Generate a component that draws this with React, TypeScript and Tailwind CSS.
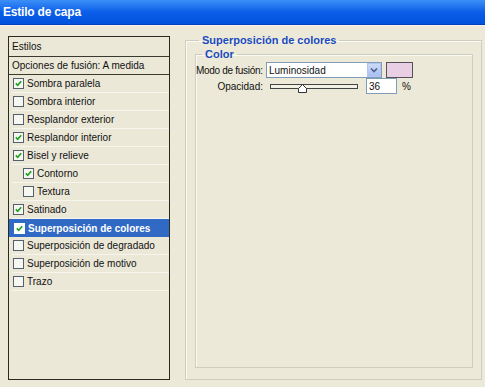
import React from 'react'

const font = "font-['Liberation_Sans',Arial,sans-serif]"

const CheckBox = ({ checked, light }: { checked: boolean; light?: boolean }) => (
  <span
    className={`w-[11px] h-[11px] shrink-0 border ${light ? 'border-white bg-white' : 'border-[#55606e] bg-[#f7f7f2]'} flex items-center justify-center`}
  >
    {checked && (
      <svg width="7" height="7" viewBox="0 0 7 7">
        <path d="M0.8 3.4 L2.7 5.3 L6.2 1.2" fill="none" stroke="#21a121" strokeWidth="1.7" />
      </svg>
    )}
  </span>
)

interface RowProps {
  label: string
  checked: boolean
  indent?: boolean
  selected?: boolean
}

const StyleRow = ({ label, checked, indent, selected }: RowProps) => (
  <div
    className={`h-[18px] flex items-center gap-[3px] ${indent ? 'pl-[11px]' : 'pl-[1px]'} ${
      selected ? 'bg-[#316ac5] text-white font-bold' : 'border-b border-[#f7f6ee] ml-[3px] text-[#111]'
    }`}
  >
    <span className={selected ? 'ml-[4px] flex' : 'flex'}>
      <CheckBox checked={checked} light={selected} />
    </span>
    <span>{label}</span>
  </div>
)

const rows: RowProps[] = [
  { label: 'Sombra paralela', checked: true },
  { label: 'Sombra interior', checked: false },
  { label: 'Resplandor exterior', checked: false },
  { label: 'Resplandor interior', checked: true },
  { label: 'Bisel y relieve', checked: true },
  { label: 'Contorno', checked: true, indent: true },
  { label: 'Textura', checked: false, indent: true },
  { label: 'Satinado', checked: true },
  { label: 'Superposición de colores', checked: true, selected: true },
  { label: 'Superposición de degradado', checked: false },
  { label: 'Superposición de motivo', checked: false },
  { label: 'Trazo', checked: false },
]

export default function App() {
  return (
    <div className={`w-[485px] h-[387px] bg-[#ece9d8] flex flex-col overflow-hidden text-[10px] ${font}`}>
      <div className="h-[25px] shrink-0 bg-gradient-to-b from-[#3d8ff7] via-[#0a5ee8] to-[#0052dc] border-b border-[#003fb5] flex items-center pl-[3px]">
        <span className="text-white font-bold text-[12px] tracking-[-0.2px]">Estilo de capa</span>
      </div>
      <div className="h-[1px] bg-[#f5f4ee]" />
      <div className="flex pl-[8px] pt-[10px]">
        <div className="w-[162px] h-[344px] border border-[#2a2a22] bg-[#ebe8d8] flex flex-col">
          <div className="h-[20px] border-b border-[#3a3a30] flex items-center pl-[3px] text-[#111]">Estilos</div>
          <div className="h-[18px] border-b border-[#3a3a30] flex items-center pl-[3px] text-[#111]">
            Opciones de fusión: A medida
          </div>
          {rows.map((r) => (
            <StyleRow key={r.label} {...r} />
          ))}
        </div>

        <fieldset className="ml-[15px] mt-[-2px] w-[297px] h-[346px] border border-[#cfcdbd] shadow-[inset_1px_1px_0_#fbfaf4] pl-[9px] pr-[8px] pb-[10px]">
          <legend className="ml-[4px] px-[3px] text-[#1a4bbf] font-bold text-[11px] leading-[12px]">
            Superposición de colores
          </legend>
          <fieldset className="h-[320px] mt-[2px] border border-[#cfcdbd] shadow-[inset_1px_1px_0_#fbfaf4] pt-[2px]">
            <legend className="ml-[6px] px-[3px] text-[#1a4bbf] font-bold text-[11px] leading-[12px]">Color</legend>
            <div className="flex items-center h-[16px]">
              <span className="w-[70px] shrink-0 whitespace-nowrap text-right pr-[5px] tracking-[-0.3px] text-[#111]">Modo de fusión:</span>
              <div className="w-[116px] h-[16px] border border-[#7f9db9] bg-white flex items-center justify-between">
                <span className="pl-[2px] text-[#111]">Luminosidad</span>
                <span className="w-[14px] h-[14px] bg-gradient-to-b from-[#cdd9f8] to-[#a9bff3] border border-[#b4c6f0] flex items-center justify-center">
                  <svg width="8" height="6" viewBox="0 0 8 6">
                    <path d="M1 1.5 L4 4.5 L7 1.5" fill="none" stroke="#4d6185" strokeWidth="1.6" />
                  </svg>
                </span>
              </div>
              <div className="ml-[4px] w-[27px] h-[16px] border border-[#55505a] bg-[#e8cfe3]" />
            </div>
            <div className="flex items-center h-[16px]">
              <span className="w-[70px] shrink-0 whitespace-nowrap text-right pr-[3px] text-[#111]">Opacidad:</span>
              <div className="relative ml-[4px] w-[88px] h-[16px] flex items-center">
                <div className="w-full h-[5px] border border-[#444] bg-[#f3f1e6]" />
                <svg className="absolute left-[28px] top-[6px]" width="9" height="9" viewBox="0 0 9 9">
                  <path d="M4.5 0.5 L8.5 4.5 L8.5 8.5 L0.5 8.5 L0.5 4.5 Z" fill="#fff" stroke="#333" />
                </svg>
              </div>
              <div className="ml-[8px] w-[31px] h-[16px] border border-[#7f9db9] bg-white flex items-center pl-[2px] text-[#111]">36</div>
              <span className="ml-[5px] text-[#111]">%</span>
            </div>
          </fieldset>
        </fieldset>
      </div>
    </div>
  )
}
